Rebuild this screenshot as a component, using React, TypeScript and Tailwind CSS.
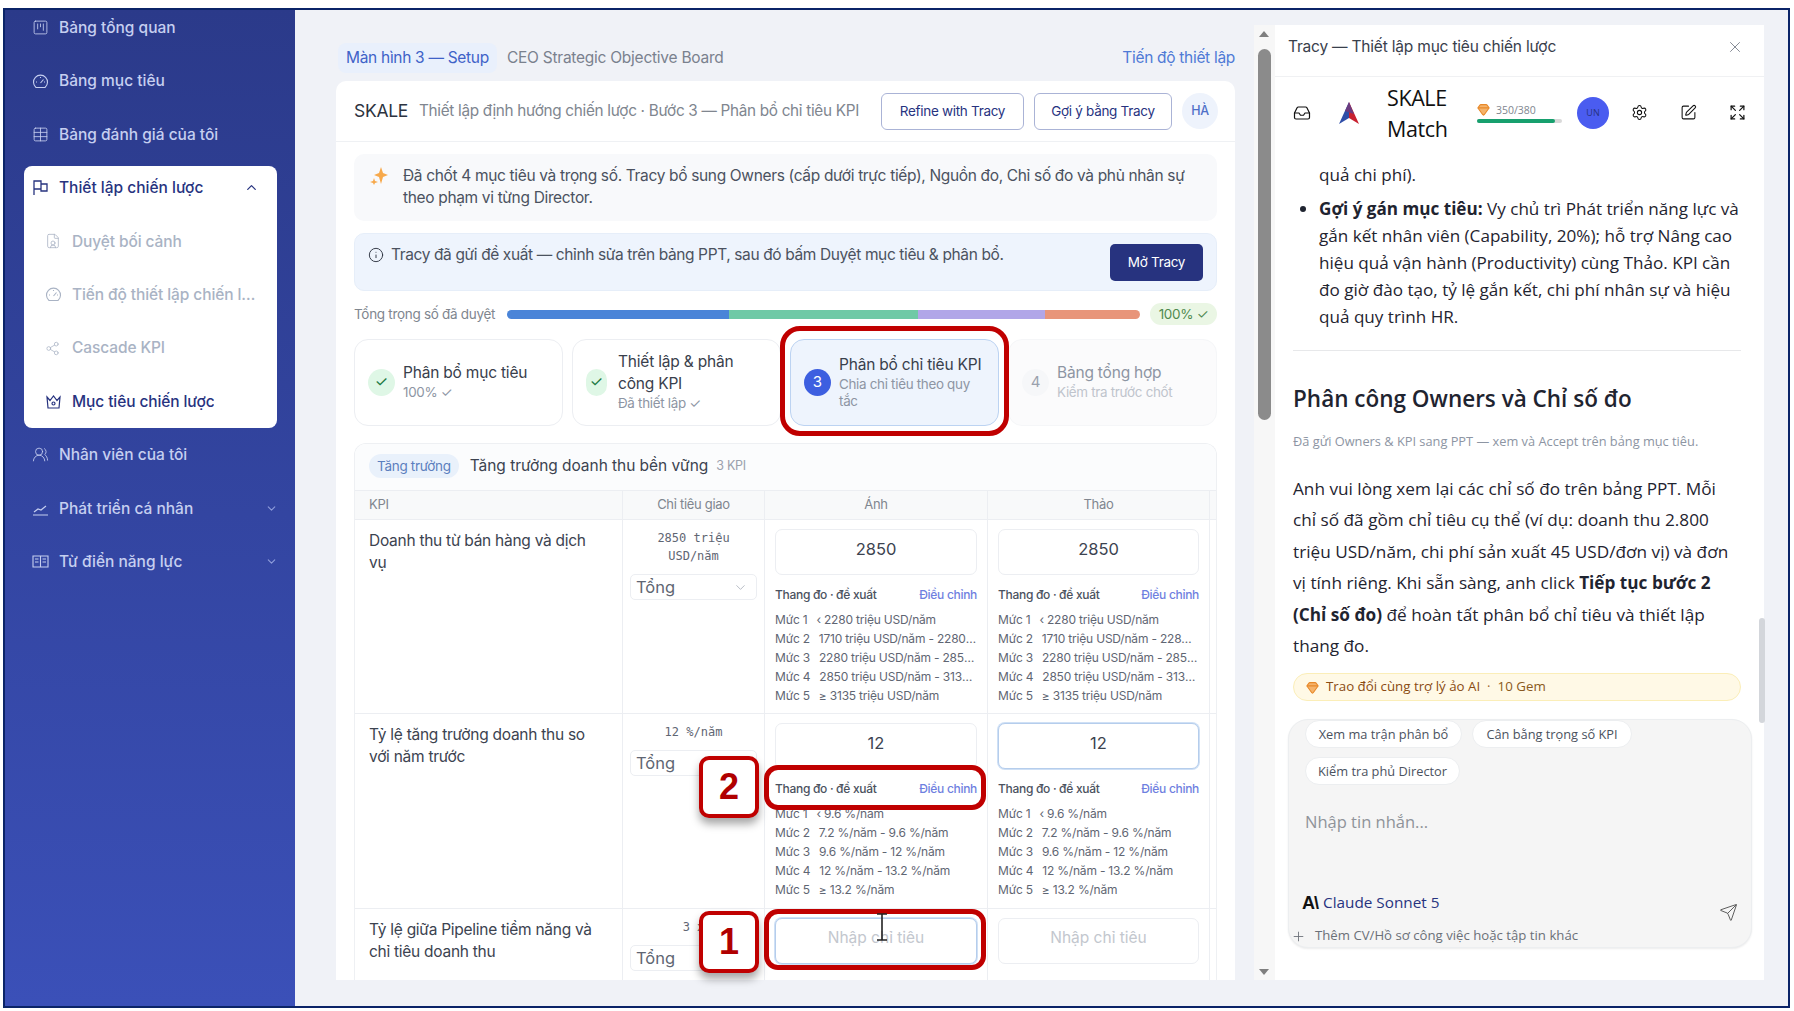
import { ChevronDown, ChevronUp, Expand, FileUser, Gem, Inbox, Info, Plus, Send, Settings, Share2, SquareKanban, SquarePen, Table, UsersRound, X } from 'lucide-react';
import type { ReactNode } from 'react';

const ui = "font-['Inter',sans-serif]";
const chat = "font-['Open_Sans',sans-serif]";

function Flag() {
  return (
    <svg width="17" height="17" viewBox="0 0 17 17" fill="none" stroke="currentColor" strokeWidth="1.3">
      <path d="M2 16V2h7v8H2M9 5h6v7H9v-2" />
    </svg>
  );
}

function Chart() {
  return (
    <svg width="17" height="17" viewBox="0 0 17 17" fill="none" stroke="currentColor" strokeWidth="1.2">
      <path d="M1 15h15M2 12l4-3 3 1 5-4" />
    </svg>
  );
}

function GaugeIcon() {
  return (
    <svg width="17" height="17" viewBox="0 0 17 17" fill="none" stroke="currentColor" strokeWidth="1.1">
      <path d="M4 14.5a7 7 0 1 1 9 0zM8.5 10l3-3.5M4 9h1M12 9h1M8.5 5V4" />
    </svg>
  );
}

function BookIcon() {
  return (
    <svg width="17" height="17" viewBox="0 0 17 17" fill="none" stroke="currentColor" strokeWidth="1.1">
      <path d="M1 3h15v11H1zM8.5 3v11M3 6h3.500M3 9h3.500M10.500 6h3.500M10.500 9h3.500" />
    </svg>
  );
}

function CrownIcon() {
  return (
    <svg width="17" height="17" viewBox="0 0 17 17" fill="none" stroke="currentColor" strokeWidth="1.2">
      <path d="M2 4l3 3.500L8.500 3 12 7.500 15 4l-1 11H3z" />
      <circle cx="8.500" cy="10.500" r="1.500" />
    </svg>
  );
}

function NavItem({ icon, label, chevron }: { icon: ReactNode; label: string; chevron?: boolean }) {
  return (
    <div className="flex h-[53.4px] items-center pl-[27px] pr-[18px] text-[#c6cff0]">
      <span className="flex w-[27px] shrink-0">{icon}</span>
      <span className="flex-1 text-[15.5px] font-medium">{label}</span>
      {chevron && <ChevronDown size={13} className="mr-[-1px] text-[#8f9ddb]" />}
    </div>
  );
}

function SubItem({ icon, label, active }: { icon: ReactNode; label: string; active?: boolean }) {
  return (
    <div className={`flex h-[53.4px] items-center pl-[21px] pr-[20px] ${active ? 'text-[#27337f]' : 'text-[#a9b3c4]'}`}>
      <span className="flex w-[27px] shrink-0">{icon}</span>
      <span className="truncate text-[15.5px] font-medium tracking-[-0.1px]">{label}</span>
    </div>
  );
}

function Step({ n, done, title, sub, active, muted, narrow }: { n: string; done?: boolean; title: string; sub: string; active?: boolean; muted?: boolean; narrow?: boolean }) {
  return (
    <div className={`flex items-center gap-[8px] rounded-[14px] border px-[13px] ${active ? 'border-[#bcd3f2] bg-[#eef4fd]' : muted ? 'border-[#f5f6f8] bg-[#fbfbfc]' : 'border-[#eceef2] bg-white'}`}>
      <span className={`flex h-[27px] shrink-0 items-center justify-center rounded-full text-[15px] ${narrow ? 'mr-[3px] w-[21px]' : 'w-[27px]'} ${active ? 'bg-[#3d5fe0] text-white' : done ? 'bg-[#dff7e6] text-[#1c7a43]' : 'bg-[#f6f7f9] text-[#9aa1ad]'}`}>
        {n}
      </span>
      <div className="mb-[2px] min-w-0">
        <div className={`text-[15.5px] leading-[22px] tracking-[-0.2px] ${muted ? 'text-[#8d95a3]' : 'text-[#39404c]'}`}>{title}</div>
        <div className={`text-[13.4px] leading-[17px] tracking-[-0.3px] ${muted ? 'text-[#bfc4cc]' : 'text-[#8d95a3]'}`}>{sub}</div>
      </div>
    </div>
  );
}

function Scale({ levels }: { levels: string[] }) {
  return (
    <div className="mt-[11px]">
      <div className="flex justify-between text-[12px] font-medium tracking-[-0.3px] text-[#4b5260]">
        <span>Thang đo · đề xuất</span>
        <span className="text-[#6f7fe0]">Điều chỉnh</span>
      </div>
      <div className="mt-[6px] text-[12px] leading-[19px] tracking-[-0.2px] text-[#5f6673]">
        {levels.map((l, i) => (
          <div key={i} className="truncate">
            <span className="mr-[9px]">Mức {i + 1}</span>
            {l}
          </div>
        ))}
      </div>
    </div>
  );
}

function Cell({ value, levels, focus, placeholder }: { value?: string; levels?: string[]; focus?: boolean; placeholder?: boolean }) {
  return (
    <div className="border-l border-[#eceef2] px-[10px] pt-[9px]">
      <div className={`flex h-[46px] items-start justify-center rounded-[7px] border bg-white pt-[7px] text-[16.5px] text-[#3c4350] ${focus ? 'border-[#b5cdec] shadow-[0_0_0_1px_#cfe0f5]' : 'border-[#eceef2]'}`}>
        {placeholder ? <span className="text-[15.5px] text-[#c3c7ce]">Nhập chỉ tiêu</span> : value}
      </div>
      {levels && <Scale levels={levels} />}
    </div>
  );
}

function KpiRow({ name, target, value, levels, h, focusB, focusA, placeholder }: { name: string; target: string; value?: string; levels?: string[]; h: string; focusA?: boolean; focusB?: boolean; placeholder?: boolean }) {
  return (
    <div className={`grid grid-cols-[267px_142px_223px_222px_1fr] border-b border-[#eceef2] ${h}`}>
      <div className="pl-[14px] pr-[24px] pt-[10px] text-[15.5px] leading-[22px] tracking-[-0.27px] text-[#3c4350]">{name}</div>
      <div className="border-l border-[#eceef2] px-[7px] pt-[9px] text-center">
        <div className="mx-auto w-[100px] font-['DejaVu_Sans_Mono',monospace] text-[12px] leading-[18px] text-[#5f6673]">{target}</div>
        <div className="mt-[9px] flex h-[26px] items-center justify-between rounded-[5px] border border-[#eceef2] bg-white px-[5px] text-[16.5px] text-[#5f6673]">
          Tổng
          <ChevronDown size={15} strokeWidth={1} className="mr-[3px] text-[#8d95a3]" />
        </div>
      </div>
      <Cell value={value} levels={levels} focus={focusA} placeholder={placeholder} />
      <Cell value={value} levels={levels} focus={focusB} placeholder={placeholder} />
      <div className="border-l border-[#eceef2]" />
    </div>
  );
}

function RedBox({ className }: { className: string }) {
  return <div className={`absolute rounded-[14px] border-[5px] border-[#c00000] ${className}`} />;
}

function Badge({ n, className }: { n: string; className: string }) {
  return (
    <div className={`absolute flex h-[62px] w-[60px] items-center justify-center rounded-[10px] border-[4px] border-[#c00000] bg-white font-['Liberation_Sans',sans-serif] text-[36px] font-bold text-[#b00000] shadow-[0_6px_8px_rgba(0,0,0,0.35)] ${className}`}>
      {n}
    </div>
  );
}

const revenue = ['‹ 2280 triệu USD/năm', '1710 triệu USD/năm - 2280 triệu USD/năm', '2280 triệu USD/năm - 2850 triệu USD/năm', '2850 triệu USD/năm - 3135 triệu USD/năm', '≥ 3135 triệu USD/năm'];
const growth = ['‹ 9.6 %/năm', '7.2 %/năm - 9.6 %/năm', '9.6 %/năm - 12 %/năm', '12 %/năm - 13.2 %/năm', '≥ 13.2 %/năm'];

export default function App() {
  return (
    <div className={`relative h-[1011px] w-[1794px] overflow-hidden bg-white pb-[3px] pl-[3px] pr-[4px] pt-[8px] ${ui}`}>
      <div className="flex h-full overflow-hidden border-[2px] border-[#0b2468] bg-[#f0f2f7]">
        {/* sidebar */}
        <aside className="w-[290px] shrink-0 overflow-hidden bg-gradient-to-b from-[#2b3a8a] to-[#3b50b8]">
          <div className="mt-[-9px]">
            <NavItem icon={<SquareKanban size={17} strokeWidth={1.2} />} label="Bảng tổng quan" />
            <NavItem icon={<GaugeIcon />} label="Bảng mục tiêu" />
            <NavItem icon={<Table size={17} strokeWidth={1.2} />} label="Bảng đánh giá của tôi" />
            <div className="ml-[19px] mr-[18px] mt-[5px] rounded-[8px] bg-white">
              <div className="flex h-[48.4px] items-center pb-[5px] pl-[8px] pr-[18px] text-[#27337f]">
                <span className="flex w-[27px] shrink-0">
                  <Flag />
                </span>
                <span className="flex-1 text-[15.5px] font-medium">Thiết lập chiến lược</span>
                <ChevronUp size={15} />
              </div>
              <SubItem icon={<FileUser size={16} strokeWidth={1.2} />} label="Duyệt bối cảnh" />
              <SubItem icon={<GaugeIcon />} label="Tiến độ thiết lập chiến lược" />
              <SubItem icon={<Share2 size={15} strokeWidth={1.2} />} label="Cascade KPI" />
              <SubItem icon={<CrownIcon />} label="Mục tiêu chiến lược" active />
            </div>
            <NavItem icon={<UsersRound size={17} strokeWidth={1.2} />} label="Nhân viên của tôi" />
            <NavItem icon={<Chart />} label="Phát triển cá nhân" chevron />
            <NavItem icon={<BookIcon />} label="Từ điển năng lực" chevron />
          </div>
        </aside>

        {/* main */}
        <main className="flex w-[959px] shrink-0 flex-col overflow-hidden pb-[26px] pl-[41px] pr-[19px] pt-[29px]">
          <div className="flex h-[42px] shrink-0 items-center justify-between pb-[4px] tracking-[-0.3px]">
            <div className="ml-[2px] flex items-center gap-[10px] text-[15.5px]">
              <span className="rounded-[8px] bg-[#e9f0fc] px-[8px] py-[3px] text-[#3f62c8]">Màn hình 3 — Setup</span>
              <span className="tracking-[-0.25px] text-[#7a818e]">CEO Strategic Objective Board</span>
            </div>
            <span className="text-[15.5px] text-[#4f7ad6]">Tiến độ thiết lập</span>
          </div>
          <div className="flex min-h-0 flex-1 flex-col overflow-hidden rounded-t-[10px] bg-white">
            <div className="flex h-[61px] shrink-0 items-center border-b border-[#eff1f4] pl-[18px] pr-[17px] tracking-[-0.3px]">
              <span className="text-[17.5px] text-[#2c3340]">SKALE</span>
              <span className="ml-[11px] flex-1 text-[15.3px] text-[#80868f]">Thiết lập định hướng chiến lược · Bước 3 — Phân bổ chỉ tiêu KPI</span>
              <span className="flex h-[37px] w-[143px] items-center justify-center rounded-[6px] border-[1.5px] border-[#aab3d6] text-[13.5px] text-[#27337f]">Refine with Tracy</span>
              <span className="ml-[10px] flex h-[37px] w-[138px] items-center justify-center rounded-[6px] border-[1.5px] border-[#aab3d6] text-[13.5px] text-[#27337f]">Gợi ý bằng Tracy</span>
              <span className="ml-[10px] flex h-[36px] w-[36px] items-center justify-center rounded-full bg-[#eef3fc] text-[12.5px] font-medium text-[#4f6fc8]">HÀ</span>
            </div>
            <div className="flex min-h-0 flex-1 flex-col overflow-hidden px-[18px] pt-[12px]">
              <div className="flex h-[67px] shrink-0 gap-[14px] rounded-[10px] bg-[#f8f9fb] px-[16px] py-[11px] text-[15.5px] leading-[22px] tracking-[-0.34px] text-[#4b5260]">
                <svg width="19" height="19" viewBox="0 0 19 19" className="mt-[1px] shrink-0" fill="#f7a94b">
                  <path d="M11 1l2 6 5 2-5 2-2 7-2-7-5-2 5-2zM4 12l1 3 3 1-3 1-1 2-1-2-3-1 3-1z" />
                </svg>
                <span>Đã chốt 4 mục tiêu và trọng số. Tracy bổ sung Owners (cấp dưới trực tiếp), Nguồn đo, Chỉ số đo và phủ nhân sự theo phạm vi từng Director.</span>
              </div>
              <div className="mt-[12px] flex h-[58px] shrink-0 items-start justify-between rounded-[10px] border border-[#e6eef9] bg-[#eef4fd] pl-[13px] pr-[13px] pt-[10px]">
                <div className="mt-[-1px] flex items-center gap-[7px] text-[15.5px] tracking-[-0.38px] text-[#4b5260]">
                  <Info size={16} strokeWidth={1.4} className="text-[#2c3340]" />
                  Tracy đã gửi đề xuất — chỉnh sửa trên bảng PPT, sau đó bấm Duyệt mục tiêu & phân bổ.
                </div>
                <span className="flex h-[37px] w-[93px] items-center justify-center rounded-[5px] bg-[#27337f] text-[13.5px] tracking-[-0.3px] text-white">Mở Tracy</span>
              </div>
              <div className="mt-[11px] flex h-[24px] shrink-0 items-center">
                <span className="w-[153px] text-[13.5px] tracking-[-0.3px] text-[#80868f]">Tổng trọng số đã duyệt</span>
                <div className="flex h-[9px] w-[633px] overflow-hidden rounded-full">
                  <div className="w-[35%] bg-[#4a84d8]" />
                  <div className="w-[30%] bg-[#6fc9a6]" />
                  <div className="w-[20%] bg-[#b1a6e8]" />
                  <div className="w-[15%] bg-[#e8957a]" />
                </div>
                <span className="ml-[10px] flex h-[22px] w-[67px] items-center justify-center rounded-full bg-[#eaf6e4] text-[13.5px] tracking-[-0.3px] text-[#4f8a4f]">100% ✓</span>
              </div>
              <div className="mt-[13px] grid h-[87px] shrink-0 grid-cols-4 gap-[9px]">
                <Step n="✓" done title="Phân bổ mục tiêu" sub="100% ✓" />
                <Step n="✓" done narrow title="Thiết lập & phân công KPI" sub="Đã thiết lập ✓" />
                <Step n="3" active title="Phân bổ chỉ tiêu KPI" sub="Chia chỉ tiêu theo quy tắc" />
                <Step n="4" muted title="Bảng tổng hợp" sub="Kiểm tra trước chốt" />
              </div>
              <div className="mt-[17px] min-h-0 flex-1 overflow-hidden rounded-t-[12px] border border-b-0 border-[#eef0f3]">
                <div className="flex h-[46px] items-center bg-[#fbfcfd] px-[14px] pb-[2px] tracking-[-0.3px]">
                  <span className="rounded-full bg-[#e9f1fb] px-[8px] py-[2px] text-[13.5px] text-[#5c7fbe]">Tăng trưởng</span>
                  <span className="ml-[11px] text-[15.5px] tracking-[-0.05px] text-[#3c4350]">Tăng trưởng doanh thu bền vững</span>
                  <span className="ml-[8px] text-[12.5px] text-[#9aa1ad]">3 KPI</span>
                </div>
                <div className="grid h-[30px] grid-cols-[267px_142px_223px_222px_1fr] items-center border-y border-[#eceef2] bg-[#f8f9fa] text-[13px] tracking-[-0.3px] text-[#80868f]">
                  <div className="px-[14px]">KPI</div>
                  <div className="flex h-full items-center justify-center border-l border-[#eceef2]">Chỉ tiêu giao</div>
                  <div className="flex h-full items-center justify-center border-l border-[#eceef2]">Ánh</div>
                  <div className="flex h-full items-center justify-center border-l border-[#eceef2]">Thảo</div>
                  <div className="h-full border-l border-[#eceef2]" />
                </div>
                <KpiRow name="Doanh thu từ bán hàng và dịch vụ" target="2850 triệu USD/năm" value="2850" levels={revenue} h="h-[194px]" />
                <KpiRow name="Tỷ lệ tăng trưởng doanh thu so với năm trước" target="12 %/năm" value="12" levels={growth} h="h-[195px]" focusB />
                <KpiRow name="Tỷ lệ giữa Pipeline tiềm năng và chỉ tiêu doanh thu" target="3 x" placeholder h="h-[90px]" focusA />
              </div>
            </div>
          </div>
        </main>

        {/* scrollbar between main and chat */}
        <div className="mb-[26px] mt-[15px] flex w-[21px] shrink-0 flex-col items-center bg-[#f7f7f7] pr-[1px]">
          <span className="mt-[6px] h-0 w-0 border-x-[5px] border-b-[6px] border-x-transparent border-b-[#7f7f7f]" />
          <span className="mt-[12px] h-[371px] w-[13px] rounded-full bg-[#8b8b8b]" />
          <span className="mb-[5px] mt-auto h-0 w-0 border-x-[5px] border-t-[6px] border-x-transparent border-t-[#7f7f7f]" />
        </div>

        {/* chat */}
        <section className={`mb-[26px] mt-[15px] flex w-[489px] shrink-0 flex-col overflow-hidden bg-white ${chat}`}>
          <div className="flex h-[52px] shrink-0 items-center justify-between border-b border-[#f0f1f3] pb-[7px] pl-[13px] pr-[20px]">
            <span className={`text-[15.5px] tracking-[-0.2px] text-[#39404c] ${ui}`}>Tracy — Thiết lập mục tiêu chiến lược</span>
            <X size={18} strokeWidth={1} className="text-[#5f6673]" />
          </div>
          <div className="flex h-[71px] shrink-0 items-center pl-[18px]">
            <Inbox size={18} strokeWidth={1.6} className="text-[#111]" />
            <svg width="24" height="24" viewBox="0 0 24 24" className="ml-[26px]">
              <path d="M12 1l-10 22 10-6z" fill="#2f4ea8" />
              <path d="M12 1l10 22-10-6z" fill="#c8202f" />
              <path d="M12 1l-4 9 9 3z" fill="#6b3b7f" />
            </svg>
            <div className="ml-[26px] w-[70px] text-[21.5px] leading-[31px] tracking-[-0.4px] text-[#111]">SKALE Match</div>
            <div className="ml-[20px] w-[85px]">
              <div className="flex items-center gap-[6px] text-[10.5px] leading-[14px] text-[#80868f]">
                <Gem size={13} className="text-[#e8892a]" fill="#f5b36b" />
                350/380
              </div>
              <div className="mt-[2px] h-[4px] rounded-full bg-[#d9d9d9]">
                <div className="h-full w-[92%] rounded-full bg-[#17a06e]" />
              </div>
            </div>
            <span className="ml-[15px] flex h-[32px] w-[32px] items-center justify-center rounded-full bg-[#4a5cf0] text-[9px] text-[#27337f]">UN</span>
            <Settings size={17} strokeWidth={1.5} className="ml-[22px] text-[#111]" />
            <SquarePen size={17} strokeWidth={1.5} className="ml-[32px] text-[#111]" />
            <Expand size={17} strokeWidth={1.7} className="ml-[32px] text-[#111]" />
          </div>
          <div className="flex min-h-0 flex-1 flex-col pl-[18px] pr-[23px] pt-[13px]">
            <div className="pl-[26px] text-[17.1px] leading-[27px] text-[#1f2430]">quả chi phí).</div>
            <ul className="mt-[7px] list-disc pl-[26px] text-[17.1px] leading-[27px] text-[#1f2430]">
              <li>
                <b>Gợi ý gán mục tiêu:</b> Vy chủ trì Phát triển năng lực và gắn kết nhân viên (Capability, 20%); hỗ trợ Nâng cao hiệu quả vận hành (Productivity) cùng Thảo. KPI cần đo giờ đào tạo, tỷ lệ gắn kết, chi phí nhân sự và hiệu quả quy trình HR.
              </li>
            </ul>
            <div className="mt-[20px] h-px shrink-0 bg-[#e7e8ea]" />
            <h2 className="mt-[28px] text-[22.5px] font-semibold leading-[40px] text-[#1f2430]">Phân công Owners và Chỉ số đo</h2>
            <p className="mt-[14px] text-[12.8px] leading-[16px] text-[#8d95a3]">Đã gửi Owners & KPI sang PPT — xem và Accept trên bảng mục tiêu.</p>
            <p className="mt-[24px] text-[17.2px] leading-[31.4px] text-[#1f2430]">
              Anh vui lòng xem lại các chỉ số đo trên bảng PPT. Mỗi chỉ số đã gồm chỉ tiêu cụ thể (ví dụ: doanh thu 2.800 triệu USD/năm, chi phí sản xuất 45 USD/đơn vị) và đơn vị tính riêng. Khi sẵn sàng, anh click <b>Tiếp tục bước 2 (Chỉ số đo)</b> để hoàn tất phân bổ chỉ tiêu và thiết lập thang đo.
            </p>
            <div className="mt-[12px] flex h-[28px] shrink-0 items-center gap-[7px] rounded-full border border-[#fbeeb8] bg-[#fff9e6] pl-[12px] text-[13.3px]">
              <Gem size={13} className="text-[#e8892a]" fill="#f5b36b" />
              <span className="font-medium text-[#8a4b12]">Trao đổi cùng trợ lý ảo AI</span>
              <span className="text-[#a06a30]">·</span>
              <span className="text-[#8a5a20]">10 Gem</span>
            </div>
            <div className="relative ml-[-5px] mr-[-11px] mt-[18px] h-[229px] shrink-0 rounded-[20px] border border-[#eceef0] bg-[#f5f5f5] px-[16px] shadow-[0_1px_2px_rgba(0,0,0,0.08)]">
              <div className="flex flex-wrap gap-x-[10px] gap-y-[9px] text-[12.8px] text-[#4b5260]">
                <span className="flex h-[28px] w-[157px] items-center justify-center rounded-full border border-[#eceef0] bg-white">Xem ma trận phân bổ</span>
                <span className="flex h-[28px] w-[160px] items-center justify-center rounded-full border border-[#eceef0] bg-white">Cân bằng trọng số KPI</span>
                <span className="flex h-[28px] w-[155px] items-center justify-center rounded-full border border-[#eceef0] bg-white">Kiểm tra phủ Director</span>
              </div>
              <div className="mt-[25px] text-[16.5px] text-[#8f9399]">Nhập tin nhắn...</div>
              <div className="mt-[48px] flex items-center justify-between">
                <div className="flex items-center gap-[5px]">
                  <span className="ml-[-3px] font-['Liberation_Sans',sans-serif] text-[18px] font-bold leading-none tracking-[-1px] text-[#111]">A\</span>
                  <span className="text-[15.3px] font-medium text-[#27337f]">Claude Sonnet 5</span>
                </div>
                <Send size={19} strokeWidth={1.2} className="mr-[-3px] mt-[20px] text-[#555]" />
              </div>
              <div className="ml-[-14px] mt-[4px] flex items-center gap-[9px] text-[13.2px] font-medium text-[#6b7078]">
                <Plus size={15} strokeWidth={1.4} />
                Thêm CV/Hồ sơ công việc hoặc tập tin khác
              </div>
            </div>
          </div>
        </section>
      </div>

      {/* hướng dẫn chú thích */}
      <RedBox className="left-[780px] top-[326px] h-[110px] w-[229px] rounded-[20px]" />
      <RedBox className="left-[764px] top-[765px] h-[45px] w-[222px]" />
      <RedBox className="left-[764px] top-[909px] h-[61px] w-[222px]" />
      <Badge n="2" className="left-[699px] top-[756px]" />
      <Badge n="1" className="left-[699px] top-[911px]" />
      <svg width="14" height="28" viewBox="0 0 14 28" className="absolute left-[875px] top-[913px]" fill="none" stroke="#222" strokeWidth="1.6">
        <path d="M2 1h10M7 1v26M2 27h10" />
      </svg>
      <div className="absolute left-[1759px] top-[618px] h-[105px] w-[6px] rounded-full bg-[#d3d6db]" />
    </div>
  );
}
